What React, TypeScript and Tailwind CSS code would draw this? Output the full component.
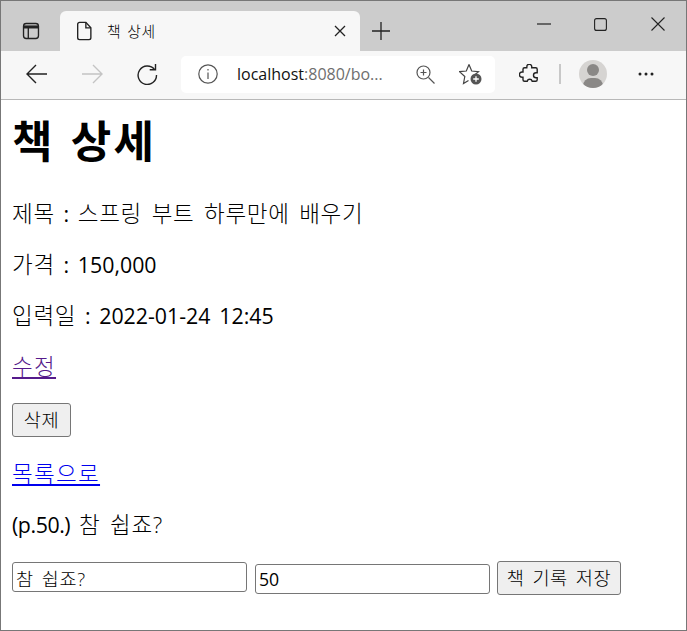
import React from "react";

const ICON_STROKE = "#222222";

// hangul in the reference runs a full em wide, Noto's is narrower
const Ko: React.FC<{ children: React.ReactNode }> = ({ children }) => (
  <span className="text-[1.055em] font-light tracking-[0.03em] [word-spacing:0.14em]">{children}</span>
);

const BrowserChrome: React.FC = () => (
  <div className="shrink-0 font-['Open_Sans','Noto_Sans_CJK_KR',sans-serif]">
    {/* tab strip */}
    <div className="flex h-[50px] bg-[#cccccc]">
      <div className="flex w-[59px] items-center justify-center pt-[10px]">
        <svg width="18" height="18" viewBox="0 0 20 20" fill="none" stroke={ICON_STROKE} strokeWidth="1.5">
          <rect x="1.7" y="1.7" width="16.6" height="16.6" rx="3" />
          <path d="M1.7 5.5h16.6" strokeWidth="3.4" />
          <path d="M7 6v12" />
        </svg>
      </div>
      <div className="mt-[10px] flex h-[40px] w-[300px] items-center rounded-t-[6px] bg-[#f7f7f7]">
        <svg className="ml-[16px]" width="17" height="20" viewBox="0 0 18 22" fill="none" stroke={ICON_STROKE} strokeWidth="1.5">
          <path d="M3.5 1.5h7l5.5 6v11a2 2 0 0 1-2 2H3.500a2 2 0 0 1-2-2v-15a2 2 0 0 1 2-2z" />
          <path d="M10.500 1.500v6h5.500" />
        </svg>
        <span className="ml-[14px] text-[14px] text-black">
          <Ko>책 상세</Ko>
        </span>
        <svg className="ml-auto mr-[14px]" width="12" height="12" viewBox="0 0 12 12" stroke={ICON_STROKE} strokeWidth="1.3">
          <path d="M1 1l10 10M11 1L1 11" />
        </svg>
      </div>
      <div className="flex w-[42px] items-center justify-center pt-[10px]">
        <svg width="18" height="18" viewBox="0 0 18 18" stroke={ICON_STROKE} strokeWidth="1.3">
          <path d="M9 0v18M0 9h18" />
        </svg>
      </div>
      <div className="ml-auto flex pb-[4px]">
        <div className="flex w-[57px] items-center justify-center">
          <svg width="14" height="2" viewBox="0 0 14 2" stroke={ICON_STROKE} strokeWidth="1.2">
            <path d="M0 1h14" />
          </svg>
        </div>
        <div className="flex w-[57px] items-center justify-center">
          <svg width="13" height="13" viewBox="0 0 13 13" fill="none" stroke={ICON_STROKE} strokeWidth="1.1">
            <rect x="0.6" y="0.6" width="11.800" height="11.800" rx="2" />
          </svg>
        </div>
        <div className="flex w-[57px] items-center justify-center">
          <svg width="14" height="14" viewBox="0 0 14 14" stroke={ICON_STROKE} strokeWidth="1.1">
            <path d="M0.500 0.500l13 13M13.500 0.500l-13 13" />
          </svg>
        </div>
      </div>
    </div>
    {/* toolbar */}
    <div className="flex h-[49px] items-center border-b border-[#b8b8b8] bg-[#f7f7f7] pb-[2px]">
      <div className="flex w-[180px] items-center">
        <svg className="ml-[25px]" width="22" height="20" viewBox="0 0 22 20" fill="none" stroke={ICON_STROKE} strokeWidth="1.4">
          <path d="M21 10H1M10 1l-9 9 9 9" />
        </svg>
        <svg className="ml-[33px]" width="22" height="20" viewBox="0 0 22 20" fill="none" stroke="#c4c4c4" strokeWidth="1.4">
          <path d="M1 10h20M12 1l9 9-9 9" />
        </svg>
        <svg className="ml-[33px]" width="22" height="22" viewBox="0 0 22 22" fill="none" stroke={ICON_STROKE} strokeWidth="1.4">
          <path d="M18.500 6.500A9.200 9.200 0 1 0 20.500 12" />
          <path d="M19.500 1v5.800h-5.800" />
        </svg>
      </div>
      <div className="flex h-[37px] w-[314px] items-center rounded-[5px] bg-white">
        <svg className="ml-[17px]" width="20" height="20" viewBox="0 0 20 20" fill="none" stroke="#555555" strokeWidth="1.2">
          <circle cx="10" cy="10" r="9.200" />
          <path d="M10 8.500v6.500M10 5v1.600" />
        </svg>
        <span className="ml-[19px] text-[16px] text-[#111]">
          localhost<span className="text-[#6e6e6e]">:8080/bo...</span>
        </span>
        <svg className="ml-auto" width="19" height="19" viewBox="0 0 19 19" fill="none" stroke="#555555" strokeWidth="1.200">
          <circle cx="7.500" cy="7.500" r="6.500" />
          <path d="M12.500 12.500l6 6M7.500 4.500v6M4.500 7.500h6" />
        </svg>
        <svg className="ml-[24px] mr-[13px]" width="23" height="22" viewBox="0 0 23 22" fill="none" stroke="#444444" strokeWidth="1.200">
          <path d="M10 1.500L12.700 8l6.800.6-4.400 3.800" />
          <path d="M9.500 17.500l-5 3 1.300-7L.5 8.600 7.300 8 10 1.500" />
          <circle cx="17" cy="16" r="5.500" fill="#555555" stroke="none" />
          <path d="M14.200 16h5.600M17 13.200v5.600" stroke="#ffffff" strokeWidth="1.300" />
        </svg>
      </div>
      <svg className="ml-[24px]" width="20" height="20" viewBox="0 0 20 20" fill="none" stroke={ICON_STROKE} strokeWidth="1.400">
        <path d="M8 1.500a2.600 2.600 0 0 1 4.800 1.200l-.1 1h4a1.500 1.500 0 0 1 1.500 1.500v3.500h-1.200a2.500 2.500 0 0 0 0 5h1.200v2a1.500 1.500 0 0 1-1.500 1.500h-3.500a2.600 2.600 0 0 0-5 0H5.500A1.500 1.500 0 0 1 4 15.700v-2.500H3a2.600 2.600 0 0 1 0-5.200h1V5.200a1.500 1.500 0 0 1 1.500-1.500h2.300z" />
      </svg>
      <div className="ml-[20px] h-[20px] w-[2px] bg-[#c8c8c8]" />
      <div className="relative ml-[18px] h-[28px] w-[28px] overflow-hidden rounded-full bg-[#d6d4d2]">
        <div className="absolute left-[8px] top-[4px] h-[12px] w-[12px] rounded-full bg-[#8a8886]" />
        <div className="absolute left-[4px] top-[18px] h-[16px] w-[20px] rounded-full bg-[#8a8886]" />
      </div>
      <svg className="ml-[31px]" width="16" height="4" viewBox="0 0 16 4" fill="#222222">
        <circle cx="2" cy="2" r="1.500" />
        <circle cx="8" cy="2" r="1.500" />
        <circle cx="14" cy="2" r="1.500" />
      </svg>
    </div>
  </div>
);

const App: React.FC = () => {
  return (
    <div className="flex h-[631px] w-[687px] flex-col overflow-hidden border border-[#777777] bg-white">
      <BrowserChrome />
      <main className="flex-1 px-[11px] font-['Open_Sans','Noto_Sans_CJK_KR',sans-serif] text-[21.33px] leading-[30px] text-black [word-spacing:0.15em]">
        <h1 className="mt-[13px] mb-[29px] text-[44px] leading-[57px] font-bold tracking-[0.05em] [word-spacing:0.055em]">책 상세</h1>
        <p className="mb-[21px]"><Ko>제목</Ko> : <Ko>스프링 부트 하루만에 배우기</Ko></p>
        <p className="mb-[21px]"><Ko>가격</Ko> : 150,000</p>
        <p className="mb-[21px]"><Ko>입력일</Ko> : 2022-01-24 12:45</p>
        <p className="mb-[21px]">
          <a href="#edit" className="text-[22.5px] font-light tracking-[0.058em] text-[#551a8b] underline">수정</a>
        </p>
        <p className="mb-[22px]">
          <button className="h-[34px] w-[59px] rounded-[3px] border border-[#767676] bg-[#efefef] text-[17.7px] leading-none"><Ko>삭제</Ko></button>
        </p>
        <p className="mb-[21px]">
          <a href="#list" className="text-[22.5px] font-light tracking-[0.058em] text-[#0000ee] underline">목록으로</a>
        </p>
        <p className="mb-[22px]">
          <span className="tracking-[-0.02em]">(p.50.)</span> <Ko>참 쉽죠?</Ko>
        </p>
        <form className="flex items-start">
          <input
            defaultValue="참 쉽죠?"
            className="h-[30px] w-[235px] rounded-[3px] border border-[#767676] px-[3px] text-[18.600px] leading-none font-light tracking-[0.03em] [word-spacing:0.15em]"
          />
          <input
            defaultValue="50"
            className="ml-[8px] mt-[2px] h-[30px] w-[235px] rounded-[3px] border border-[#767676] px-[3px] text-[17.7px] leading-none"
          />
          <button
            type="button"
            className="ml-[7px] -mt-[1px] h-[34px] w-[124px] rounded-[3px] border border-[#767676] bg-[#efefef] text-[17.7px] leading-none"
          >
            <Ko>책 기록 저장</Ko>
          </button>
        </form>
      </main>
    </div>
  );
};

export default App;
